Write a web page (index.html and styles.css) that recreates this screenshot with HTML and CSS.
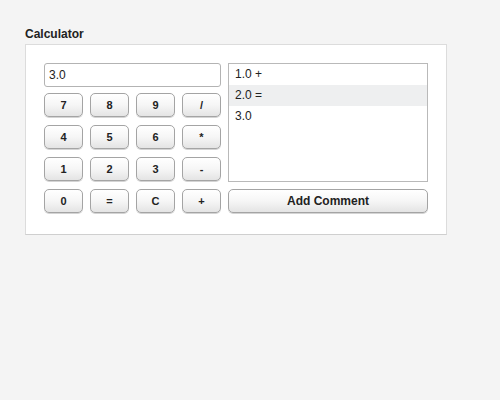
FILE: index.html
```html
<!DOCTYPE html>
<html>
<head>
<meta charset="utf-8">
<link rel="stylesheet" href="styles.css">
</head>
<body>
<div class="page">
  <div class="title">Calculator</div>
  <div class="panel">
    <div class="left">
      <input class="display" type="text" value="3.0">
      <div class="keys">
        <button class="key">7</button>
        <button class="key">8</button>
        <button class="key">9</button>
        <button class="key">/</button>
        <button class="key">4</button>
        <button class="key">5</button>
        <button class="key">6</button>
        <button class="key">*</button>
        <button class="key">1</button>
        <button class="key">2</button>
        <button class="key">3</button>
        <button class="key">-</button>
        <button class="key">0</button>
        <button class="key">=</button>
        <button class="key">C</button>
        <button class="key">+</button>
      </div>
    </div>
    <div class="right">
      <div class="history">
        <div class="item">1.0 +</div>
        <div class="item selected">2.0 =</div>
        <div class="item">3.0</div>
      </div>
      <button class="key wide">Add Comment</button>
    </div>
  </div>
</div>
</body>
</html>
```
FILE: styles.css
```css
html, body {
  margin: 0;
  padding: 0;
  background: #f4f4f4;
  font-family: "Liberation Sans", Arial, sans-serif;
}
.page {
  padding: 27px 0 0 25px;
}
.title {
  font-size: 12px;
  line-height: 14px;
  font-weight: bold;
  color: #222;
  margin-bottom: 3px;
}
.panel {
  width: 384px;
  height: 151px;
  padding: 18px 18px 20px 18px;
  background: #fff;
  border: 1px solid #dcdcdc;
  border-bottom-color: #cfcfcf;
  display: flex;
  gap: 7px;
  align-items: flex-start;
}
.left {
  width: 177px;
  display: flex;
  flex-direction: column;
  gap: 6px;
}
.display {
  box-sizing: border-box;
  width: 177px;
  height: 24px;
  margin: 0;
  padding: 0 4px;
  border: 1px solid #b3b3b3;
  border-radius: 3px;
  font-family: "Liberation Sans", Arial, sans-serif;
  font-size: 12px;
  color: #222;
  background: #fff;
}
.keys {
  display: grid;
  grid-template-columns: repeat(4, 39px);
  grid-auto-rows: 24px;
  column-gap: 7px;
  row-gap: 8px;
}
.key {
  box-sizing: border-box;
  margin: 0;
  padding: 0;
  height: 24px;
  border: 1px solid #a4a4a4;
  border-radius: 5px;
  background: linear-gradient(#ffffff 0%, #f6f6f6 50%, #e4e4e4 100%);
  box-shadow: 0 1px 0 #d4d4d4;
  font-family: "Liberation Sans", Arial, sans-serif;
  font-size: 11px;
  font-weight: bold;
  color: #222;
}
.right {
  width: 200px;
  display: flex;
  flex-direction: column;
  gap: 7px;
}
.history {
  box-sizing: border-box;
  height: 119px;
  border: 1px solid #b9b9b9;
  background: #fff;
}
.item {
  height: 21px;
  line-height: 20px;
  padding-left: 6px;
  font-size: 12px;
  color: #222;
}
.item.selected {
  background: #eeeff0;
}
.wide {
  width: 200px;
  font-size: 12px;
}
```
